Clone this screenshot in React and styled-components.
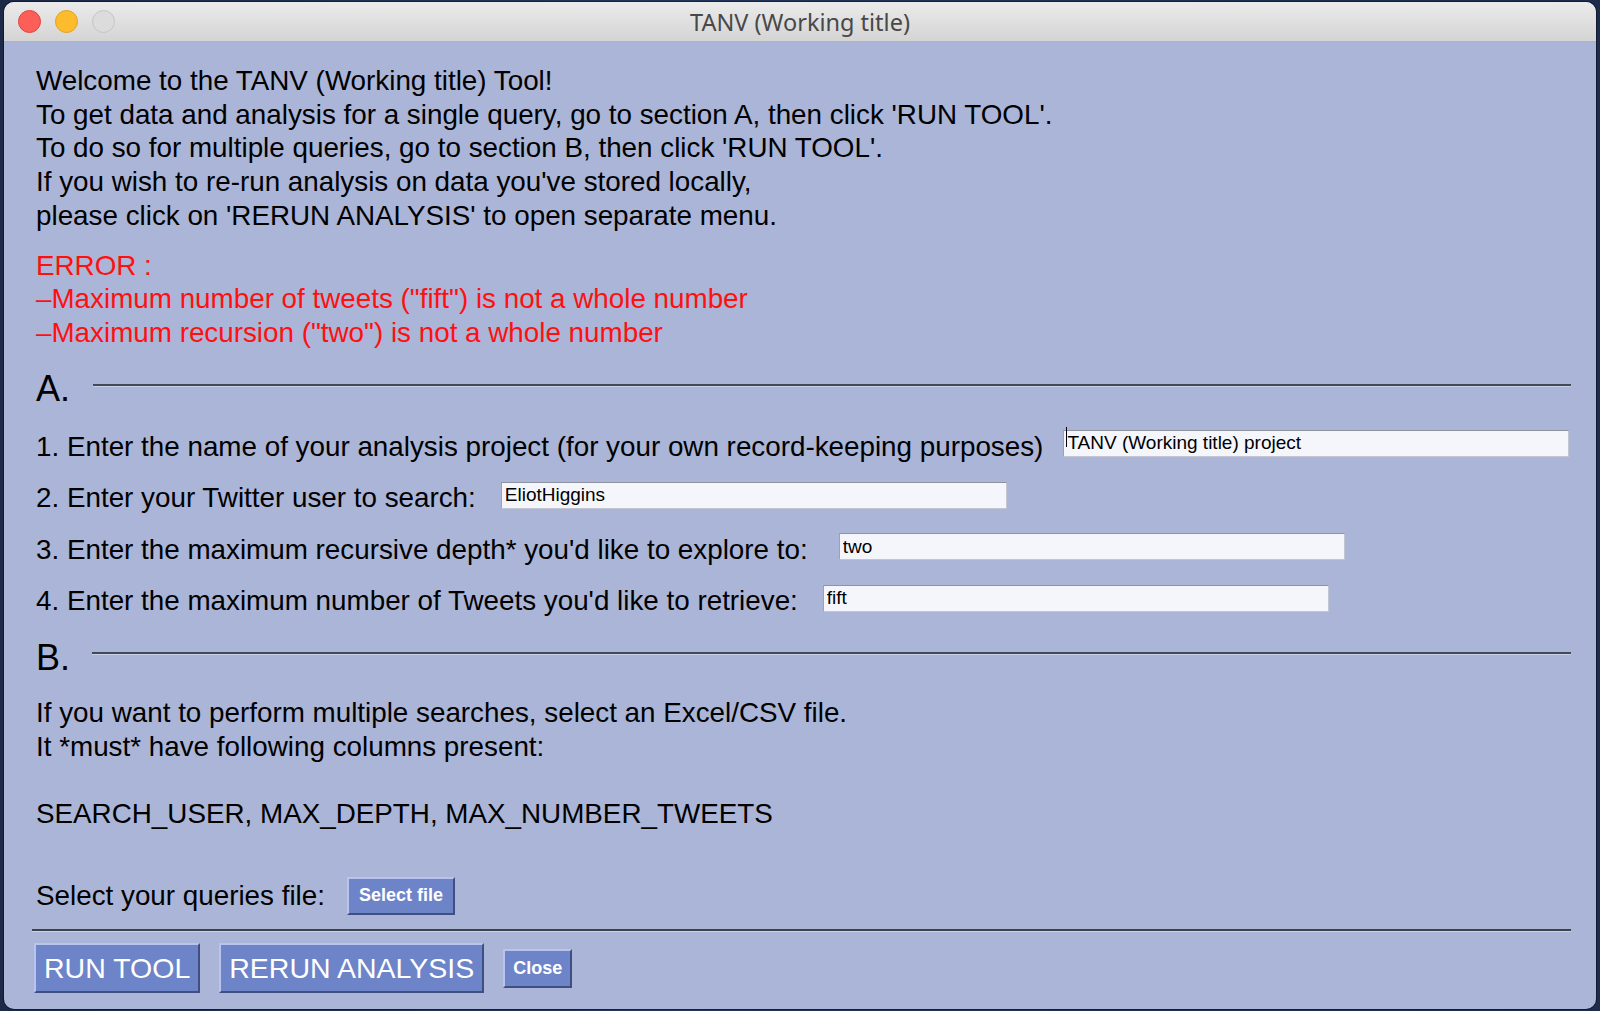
import styled, { createGlobalStyle } from 'styled-components';

const GlobalStyle = createGlobalStyle`
  html, body {
    margin: 0;
    padding: 0;
    height: 100%;
  }
  body {
    background: linear-gradient(90deg, #1c2a48 0%, #24365a 40%, #1d2c4c 100%);
    font-family: "Liberation Sans", Arial, sans-serif;
    overflow: hidden;
  }
`;

const Window = styled.div`
  margin: 2px 4px 0;
  height: 1007px;
  border-radius: 10px;
  overflow: hidden;
  display: flex;
  flex-direction: column;
  background: #abb5d7;
  box-shadow: 0 0 0 1px rgba(0, 0, 0, 0.35);
`;

const TitleBar = styled.div`
  height: 39px;
  flex: none;
  display: flex;
  align-items: center;
  position: relative;
  padding-left: 14px;
  gap: 14px;
  background: linear-gradient(#ebebeb, #d4d4d4);
  border-bottom: 1px solid #b3b3b3;
`;

const Light = styled.span`
  width: 23px;
  height: 23px;
  border-radius: 50%;
  box-sizing: border-box;
  background: ${p => p.$color};
  border: 1px solid ${p => p.$edge};
`;

const Title = styled.div`
  position: absolute;
  left: 0;
  right: 0;
  text-align: center;
  font-family: "Noto Sans", "Liberation Sans", sans-serif;
  font-size: 23.5px;
  color: #484848;
  pointer-events: none;
`;

const Content = styled.div`
  flex: 1;
  padding: 22px 25px 0 32px;
  color: #000;
  font-size: 27.8px;
  line-height: 33.7px;
`;

const TextBlock = styled.div`
  margin-top: ${p => p.$top || 0}px;
  color: ${p => p.$color || '#000'};
  white-space: pre-line;
`;

const SectionHeader = styled.div`
  display: flex;
  align-items: center;
  height: 50px;
  margin-top: ${p => p.$top}px;
  font-size: 36px;
  line-height: 50px;
`;

const Rule = styled.div`
  flex: 1;
  height: 2px;
  background: #434a56;
  border-bottom: 1px solid #c9d0ea;
  margin-left: ${p => p.$indent || 0}px;
  margin-top: ${p => p.$shift || 0}px;
`;

const Row = styled.div`
  display: flex;
  align-items: center;
  height: 51.6px;
  white-space: nowrap;
  gap: ${p => p.$gap || 24}px;
  margin-top: ${p => p.$top || 0}px;
`;

const Field = styled.div`
  position: relative;
  width: 506px;
  height: 27px;
  flex: none;
  margin-bottom: 19px;

  ${p => p.$caret && `
    &::after {
      content: '';
      position: absolute;
      left: 3px;
      top: 4px;
      width: 1px;
      height: 20px;
      background: #000;
    }
  `}
`;

const Input = styled.input`
  box-sizing: border-box;
  width: 100%;
  height: 100%;
  margin: 0;
  padding: 0 3px;
  font-family: "Liberation Sans", Arial, sans-serif;
  font-size: 19px;
  color: #000;
  background: #f5f6fc;
  border: 1px solid #c3c6d2;
  border-top-color: #8e939f;
  border-left-color: #9da2ae;
  outline: none;
`;

const Button = styled.button`
  box-sizing: border-box;
  height: ${p => p.$h}px;
  padding: 0 ${p => p.$px}px;
  margin: 0;
  font-family: "Liberation Sans", Arial, sans-serif;
  font-size: ${p => p.$size}px;
  font-weight: ${p => (p.$bold ? 700 : 400)};
  white-space: nowrap;
  color: #fff;
  background: #6d84c9;
  border: 2px solid;
  border-color: #b9c4ee #3f4f82 #3f4f82 #b9c4ee;
  cursor: pointer;
`;

const BottomRule = styled.div`
  height: 2px;
  margin: 8px 0 0 -4px;
  background: #3c424c;
  border-bottom: 1px solid #c9d0ea;
`;

const Actions = styled.div`
  display: flex;
  align-items: center;
  gap: 19px;
  margin: 11px 0 0 -2px;
`;

export default function App() {
  return (
    <>
      <GlobalStyle />
      <Window>
        <TitleBar>
          <Light $color="#fc5f57" $edge="#e0443e" />
          <Light $color="#fdbc2e" $edge="#dea123" />
          <Light $color="#dcdcdc" $edge="#c4c4c4" />
          <Title>TANV (Working title)</Title>
        </TitleBar>
        <Content>
          <TextBlock>
            {`Welcome to the TANV (Working title) Tool!
To get data and analysis for a single query, go to section A, then click 'RUN TOOL'.
To do so for multiple queries, go to section B, then click 'RUN TOOL'.
If you wish to re-run analysis on data you've stored locally,
please click on 'RERUN ANALYSIS' to open separate menu.`}
          </TextBlock>
          <TextBlock $top={16} $color="#ff1010">
            {`ERROR :
–Maximum number of tweets ("fift") is not a whole number
–Maximum recursion ("two") is not a whole number`}
          </TextBlock>

          <SectionHeader $top={14}>
            A.
            <Rule $indent={23} $shift={-6} />
          </SectionHeader>
          <Row $top={7} $gap={20}>
            1. Enter the name of your analysis project (for your own record-keeping purposes)
            <Field $caret>
              <Input readOnly defaultValue="TANV (Working title) project" />
            </Field>
          </Row>
          <Row $gap={25}>
            2. Enter your Twitter user to search:
            <Field>
              <Input readOnly defaultValue="EliotHiggins" />
            </Field>
          </Row>
          <Row $gap={31}>
            3. Enter the maximum recursive depth* you'd like to explore to:
            <Field>
              <Input readOnly defaultValue="two" />
            </Field>
          </Row>
          <Row $gap={25}>
            4. Enter the maximum number of Tweets you'd like to retrieve:
            <Field>
              <Input readOnly defaultValue="fift" />
            </Field>
          </Row>

          <SectionHeader $top={6}>
            B.
            <Rule $indent={22} $shift={-10} />
          </SectionHeader>
          <TextBlock $top={13}>
            {`If you want to perform multiple searches, select an Excel/CSV file.
It *must* have following columns present:
 
SEARCH_USER, MAX_DEPTH, MAX_NUMBER_TWEETS`}
          </TextBlock>
          <Row $top={39} $gap={22}>
            Select your queries file:
            <Button $h={38} $px={10} $size={18} $bold>Select file</Button>
          </Row>
          <BottomRule />
          <Actions>
            <Button $h={50} $px={8} $size={28.5}>RUN TOOL</Button>
            <Button $h={50} $px={8} $size={28.5}>RERUN ANALYSIS</Button>
            <Button $h={39} $px={8} $size={18} $bold>Close</Button>
          </Actions>
        </Content>
      </Window>
    </>
  );
}
